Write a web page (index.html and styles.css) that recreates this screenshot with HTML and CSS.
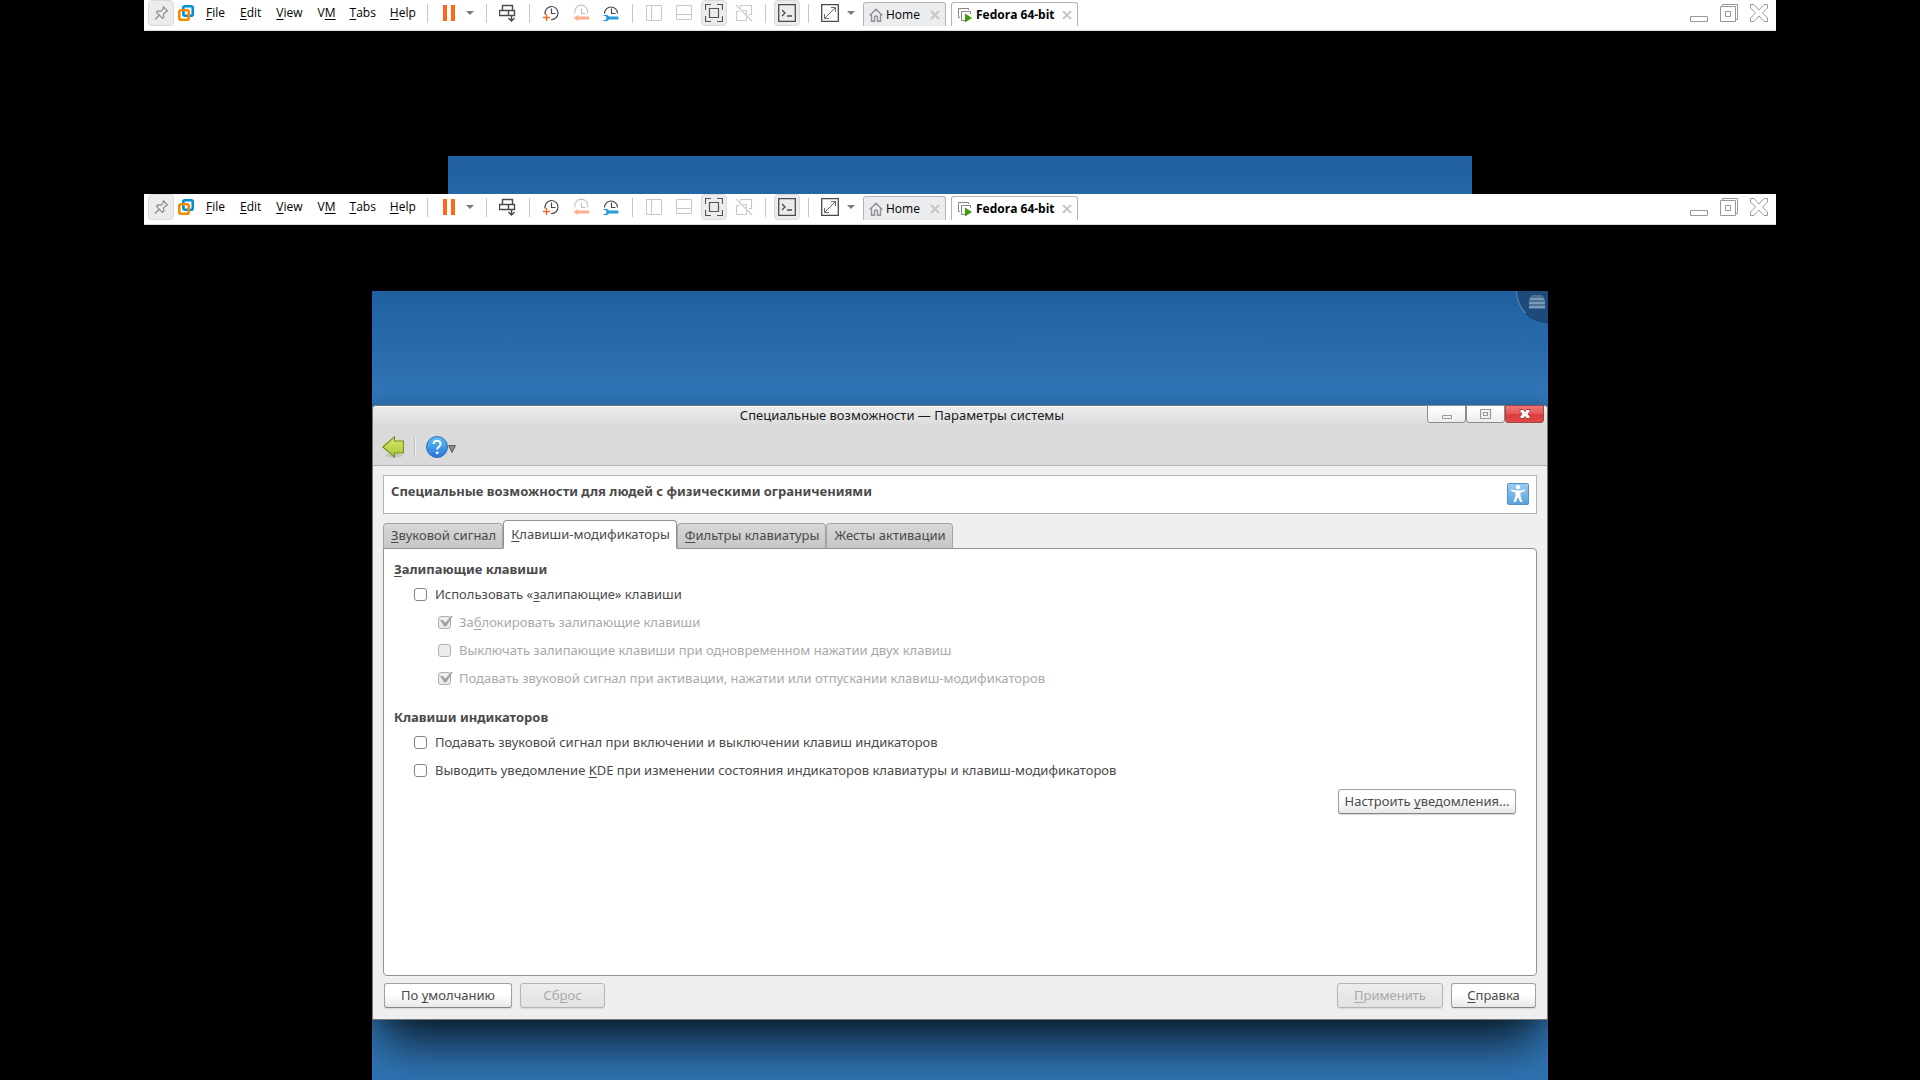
FILE: index.html
```html
<!DOCTYPE html>
<html lang="ru">
<head>
<meta charset="utf-8">
<title>Специальные возможности — Параметры системы</title>
<link rel="stylesheet" href="styles.css">
</head>
<body>
<svg class="sprite" aria-hidden="true">
  <symbol id="i-pin" viewBox="0 0 18 18"><g fill="none" stroke="#8a8d91" stroke-width="1.2"><path d="M11.500 3l4 4-1.500.8-2.500 2.200.3 3-1.300 1.300-6-6 1.300-1.300 3 .3 2.200-2.500z"/><path d="M7.500 11L3 15.500"/></g></symbol>
  <symbol id="i-logo" viewBox="0 0 16 16"><g fill="none" stroke-width="2.600"><rect x="5.300" y="1.300" width="9.400" height="9.400" rx="1.500" stroke="#0091da"/><rect x="1.300" y="5.300" width="9.400" height="9.400" rx="1.500" stroke="#f38b00"/><path d="M5.300 9.500V7" stroke="#0091da"/></g></symbol>
  <symbol id="i-pause" viewBox="0 0 18 18"><path d="M3 1h4v16H3zM11 1h4v16h-4z" fill="#ff671b"/></symbol>
  <symbol id="i-send" viewBox="0 0 18 18"><path d="M3.500 1.500h10v5h-10zM.5 6.500h15v5H.5zM9.500 6.500v5M12.500 11v6M9.500 14l3 3 3-3" fill="none" stroke="#4a4a4a" stroke-width="1.400"/></symbol>
  <symbol id="i-snap" viewBox="0 0 18 18"><path d="M3.200 10.500A6.500 6.500 0 1 1 9 15.500M9.500 4.500v5h4" fill="none" stroke="#4a4a4a" stroke-width="1.200"/><path d="M4.500 10v7M1 13.500h7" stroke="#ff671b" stroke-width="1.300"/></symbol>
  <symbol id="i-revert" viewBox="0 0 18 18"><path d="M3 9.500A6.500 6.500 0 1 1 15.500 9.500M9.500 4.500v5h4" fill="none" stroke="#c4c4c4" stroke-width="1.200"/><path d="M1.500 14L6 11v1.500h11v3H6V17z" fill="#ffb08a"/></symbol>
  <symbol id="i-manage" viewBox="0 0 18 18"><path d="M2.500 9.500A6.500 6.500 0 1 1 15.500 9.500M9.500 4.500v5h4" fill="none" stroke="#4a4a4a" stroke-width="1.200"/><path d="M1 12h2.500l1 2-1 2H1c1 1.700 4.500 1.700 6-.5h9q1.500-1.500 0-3H7c-1.500-2.200-5-2.200-6-.5z" fill="#2a99de"/></symbol>
  <symbol id="i-side" viewBox="0 0 18 18"><path d="M1.500 1.500h15v15h-15zM6.500 1.500v15" fill="none" stroke="#c8c8c8"/></symbol>
  <symbol id="i-bottom" viewBox="0 0 18 18"><path d="M1.500 1.500h15v14h-15zM1.500 10.500h15" fill="none" stroke="#c8c8c8"/></symbol>
  <symbol id="i-full" viewBox="0 0 18 18"><path d="M.5 6V.5H6M12 .5h5.500V6M17.500 12v5.500H12M6 17.500H.5V12M4.500 4.500h9v9h-9z" fill="none" stroke="#555" stroke-width="1.200"/></symbol>
  <symbol id="i-unity" viewBox="0 0 18 18"><path d="M5.500 1.500h11v9h-3M1.500 16.500h10v-4M5.500 1.500v2M1.500 16.500V7.500h3M8 6.500h3.500V10M1 1l16 16" fill="none" stroke="#c8c8c8" stroke-width="1.100"/></symbol>
  <symbol id="i-term" viewBox="0 0 18 18"><path d="M.7.700h16.600v16.600H.7z" fill="none" stroke="#4a4a4a" stroke-width="1.300"/><path d="M4 6l3 3-3 3M9 12h5" fill="none" stroke="#4a4a4a" stroke-width="1.300"/></symbol>
  <symbol id="i-stretch" viewBox="0 0 18 18"><path d="M.7.700h16.600v16.600H.7z" fill="none" stroke="#4a4a4a" stroke-width="1.300"/><path d="M10 3.500h4.500V8M3.500 10v4.500H8M14 4L4 14" fill="none" stroke="#666"/></symbol>
  <symbol id="i-caret" viewBox="0 0 8 4"><path d="M0 0h8L4 4z" fill="#7b7b7b"/></symbol>
  <symbol id="i-home" viewBox="0 0 14 14"><path d="M.7 7.500L7 1.200l6.300 6.300M2.500 6.500v6.800h3V9.500q0-1.500 1.500-1.500t1.500 1.500v3.800h3V6.500" fill="none" stroke="#8f9296" stroke-width="1.400"/></symbol>
  <symbol id="i-vm" viewBox="0 0 16 16"><path d="M3 10.500H1.500v-9h10V3M8 13.500H4.500v-9h9V7" fill="none" stroke="#858585"/><path d="M8 6.500l7 4.500-7 4.500z" fill="#3f9c12"/></symbol>
  <symbol id="i-close" viewBox="0 0 10 10"><path d="M1 1l8 8M9 1L1 9" stroke="#c6c7c8" stroke-width="2"/></symbol>
  <symbol id="i-min" viewBox="0 0 18 18"><path d="M.5 12.500h17v5H.5z" fill="none" stroke="#999"/></symbol>
  <symbol id="i-restore" viewBox="0 0 18 18"><path d="M.5 2.500h15v15H.5zM2.500 2.500v-2h15v15h-2M5.500 7.500h5v5h-5z" fill="none" stroke="#999"/></symbol>
  <symbol id="i-x" viewBox="0 0 18 18"><path d="M.5.500H4l5 5.500 5-5.500h3.500V4l-5 5 5 5v3.500H14L9 12l-5 5.500H.5V14l5-5-5-5z" fill="none" stroke="#999"/></symbol>
</svg>

<section class="capture">
  <header class="vmbar">
    <button class="tool on" aria-label="Pin"><svg><use href="#i-pin"/></svg></button>
    <svg class="logo" aria-hidden="true"><use href="#i-logo"/></svg>
    <nav class="menu">
      <button><u>F</u>ile</button><button><u>E</u>dit</button><button><u>V</u>iew</button><button>V<u>M</u></button><button><u>T</u>abs</button><button><u>H</u>elp</button>
    </nav>
    <span class="sep"></span>
    <button class="tool" aria-label="Suspend"><svg><use href="#i-pause"/></svg></button>
    <button class="drop" aria-label="Power options"><svg><use href="#i-caret"/></svg></button>
    <span class="sep"></span>
    <button class="tool" aria-label="Send keys"><svg><use href="#i-send"/></svg></button>
    <span class="sep"></span>
    <div class="tools">
      <button class="tool" aria-label="Take snapshot"><svg><use href="#i-snap"/></svg></button>
      <button class="tool" aria-label="Revert snapshot" disabled><svg><use href="#i-revert"/></svg></button>
      <button class="tool" aria-label="Manage snapshots"><svg><use href="#i-manage"/></svg></button>
    </div>
    <span class="sep"></span>
    <div class="tools">
      <button class="tool" aria-label="Library" disabled><svg><use href="#i-side"/></svg></button>
      <button class="tool" aria-label="Thumbnail bar" disabled><svg><use href="#i-bottom"/></svg></button>
      <button class="tool on" aria-label="Full screen"><svg><use href="#i-full"/></svg></button>
      <button class="tool" aria-label="Unity" disabled><svg><use href="#i-unity"/></svg></button>
    </div>
    <span class="sep"></span>
    <button class="tool on" aria-label="Console view"><svg><use href="#i-term"/></svg></button>
    <span class="sep"></span>
    <button class="tool" aria-label="Stretch"><svg><use href="#i-stretch"/></svg></button>
    <button class="drop" aria-label="Stretch options"><svg><use href="#i-caret"/></svg></button>
    <div class="vmtabs">
      <div class="vmtab"><svg class="home"><use href="#i-home"/></svg><button class="name">Home</button><button class="shut" aria-label="Close Home"><svg><use href="#i-close"/></svg></button></div>
      <div class="vmtab current"><svg class="vm"><use href="#i-vm"/></svg><button class="name">Fedora 64-bit</button><button class="shut" aria-label="Close Fedora"><svg><use href="#i-close"/></svg></button></div>
    </div>
    <div class="winctl">
      <button aria-label="Minimize"><svg><use href="#i-min"/></svg></button>
      <button aria-label="Restore"><svg><use href="#i-restore"/></svg></button>
      <button aria-label="Close"><svg><use href="#i-x"/></svg></button>
    </div>
  </header>
  <div class="strip"></div>
</section>

<section class="capture main">
  <header class="vmbar">
    <button class="tool on" aria-label="Pin"><svg><use href="#i-pin"/></svg></button>
    <svg class="logo" aria-hidden="true"><use href="#i-logo"/></svg>
    <nav class="menu">
      <button><u>F</u>ile</button><button><u>E</u>dit</button><button><u>V</u>iew</button><button>V<u>M</u></button><button><u>T</u>abs</button><button><u>H</u>elp</button>
    </nav>
    <span class="sep"></span>
    <button class="tool" aria-label="Suspend"><svg><use href="#i-pause"/></svg></button>
    <button class="drop" aria-label="Power options"><svg><use href="#i-caret"/></svg></button>
    <span class="sep"></span>
    <button class="tool" aria-label="Send keys"><svg><use href="#i-send"/></svg></button>
    <span class="sep"></span>
    <div class="tools">
      <button class="tool" aria-label="Take snapshot"><svg><use href="#i-snap"/></svg></button>
      <button class="tool" aria-label="Revert snapshot" disabled><svg><use href="#i-revert"/></svg></button>
      <button class="tool" aria-label="Manage snapshots"><svg><use href="#i-manage"/></svg></button>
    </div>
    <span class="sep"></span>
    <div class="tools">
      <button class="tool" aria-label="Library" disabled><svg><use href="#i-side"/></svg></button>
      <button class="tool" aria-label="Thumbnail bar" disabled><svg><use href="#i-bottom"/></svg></button>
      <button class="tool on" aria-label="Full screen"><svg><use href="#i-full"/></svg></button>
      <button class="tool" aria-label="Unity" disabled><svg><use href="#i-unity"/></svg></button>
    </div>
    <span class="sep"></span>
    <button class="tool on" aria-label="Console view"><svg><use href="#i-term"/></svg></button>
    <span class="sep"></span>
    <button class="tool" aria-label="Stretch"><svg><use href="#i-stretch"/></svg></button>
    <button class="drop" aria-label="Stretch options"><svg><use href="#i-caret"/></svg></button>
    <div class="vmtabs">
      <div class="vmtab"><svg class="home"><use href="#i-home"/></svg><button class="name">Home</button><button class="shut" aria-label="Close Home"><svg><use href="#i-close"/></svg></button></div>
      <div class="vmtab current"><svg class="vm"><use href="#i-vm"/></svg><button class="name">Fedora 64-bit</button><button class="shut" aria-label="Close Fedora"><svg><use href="#i-close"/></svg></button></div>
    </div>
    <div class="winctl">
      <button aria-label="Minimize"><svg><use href="#i-min"/></svg></button>
      <button aria-label="Restore"><svg><use href="#i-restore"/></svg></button>
      <button aria-label="Close"><svg><use href="#i-x"/></svg></button>
    </div>
  </header>

  <div class="desktop">
    <button class="toolbox" aria-label="Desktop toolbox">
      <svg viewBox="0 0 16 14"><path d="M3 0h10l3 4v10H0V4z" fill="#4c7196"/><path d="M1 4h14M0 8h16M0 12h16" stroke="#8ba6c0" stroke-width="1.500"/></svg>
    </button>

    <main class="window">
      <header class="chrome">
        <div class="titlebar">
          <h1>Специальные возможности — Параметры системы</h1>
          <div class="wbtns">
            <button aria-label="Свернуть"><svg viewBox="0 0 12 12"><path d="M1.500 7.500h9v3h-9z" fill="none" stroke="#999"/></svg></button>
            <button aria-label="Развернуть"><svg viewBox="0 0 12 12"><path d="M.5 1.500h10v9H.5zM3.500 4.500h4v3h-4z" fill="none" stroke="#999" stroke-width="1.200"/></svg></button>
            <button class="kill" aria-label="Закрыть"><svg viewBox="0 0 12 12"><path d="M1 1.500h3.500L6 3.500l1.500-2H11v2L9 6l2 2.500v2H7.500L6 8.500l-1.500 2H1v-2L3 6 1 3.500z" fill="#fff" stroke="#b73535"/></svg></button>
          </div>
        </div>
        <div class="actions">
          <button class="act" aria-label="Назад">
            <svg viewBox="0 0 22 22"><defs><linearGradient id="g-back" x2="0" y2="1"><stop offset="0" stop-color="#dfe96c"/><stop offset="1" stop-color="#a8c332"/></linearGradient></defs><ellipse cx="12" cy="19.500" rx="9" ry="1.800" fill="#c2c2c2"/><path d="M.8 11L12.500.8v4.200h9v12h-9v4.200z" fill="url(#g-back)" stroke="#6f9322" stroke-width="1.100"/></svg>
          </button>
          <span class="groove"></span>
          <button class="act help" aria-label="Справка">
            <svg viewBox="0 0 22 22"><defs><linearGradient id="g-help" x2="0" y2="1"><stop offset="0" stop-color="#5cc2f4"/><stop offset="1" stop-color="#2a74e0"/></linearGradient></defs><circle cx="11" cy="11" r="10.500" fill="url(#g-help)" stroke="#2f6fb5"/><path d="M7.600 8c0-4.400 7-4.400 7 0 0 2.800-3.400 2.800-3.400 5.500" fill="none" stroke="#fff" stroke-width="2"/><circle cx="11.200" cy="16.800" r="1.400" fill="#fff"/></svg>
            <svg class="tri" viewBox="0 0 8 8"><path d="M.5.500h7L4 7.500z" fill="#8a8a8a" stroke="#5f5f5f"/></svg>
          </button>
        </div>
      </header>

      <div class="content">
        <div class="banner">
          <h2>Специальные возможности для людей с физическими ограничениями</h2>
          <svg viewBox="0 0 22 22"><defs><linearGradient id="g-acc" x2="0" y2="1"><stop offset="0" stop-color="#9bcdf4"/><stop offset="1" stop-color="#5aa0dc"/></linearGradient></defs><rect x=".5" y=".5" width="21" height="21" rx="1" fill="url(#g-acc)" stroke="#5590c4"/><circle cx="11" cy="4.300" r="2.200" fill="#fff"/><path d="M4 6.500l5 1h4l5-1v1.500l-4.500 1.500v3.500l2 6h-2.200L11 14l-2.300 5H6.500l2-6V9.500L4 8z" fill="#fff"/></svg>
        </div>

        <div class="tabs" role="tablist">
          <button role="tab"><u>З</u>вуковой сигнал</button>
          <button role="tab" class="current" aria-selected="true"><u>К</u>лавиши-модификаторы</button>
          <button role="tab"><u>Ф</u>ильтры клавиатуры</button>
          <button role="tab">Жесты активации</button>
        </div>

        <div class="panel" role="tabpanel">
          <h3><u>З</u>алипающие клавиши</h3>
          <label class="row"><input type="checkbox"><span>Использовать «<u>з</u>алипающие» клавиши</span></label>
          <label class="row sub"><input type="checkbox" checked disabled><span>За<u>б</u>локировать залипающие клавиши</span></label>
          <label class="row sub"><input type="checkbox" disabled><span>Выключать залипающие клавиши при одновременном нажатии двух клавиш</span></label>
          <label class="row sub"><input type="checkbox" checked disabled><span>Подавать звуковой сигнал при активации, нажатии или отпускании клавиш-модификаторов</span></label>
          <h3 class="second">Клавиши индикаторов</h3>
          <label class="row"><input type="checkbox"><span>Подавать звуковой сигнал при включении и выключении клавиш индикаторов</span></label>
          <label class="row"><input type="checkbox"><span>Выводить уведомление <u>K</u>DE при изменении состояния индикаторов клавиатуры и клавиш-модификаторов</span></label>
          <button class="btn notify">Настроить <u>у</u>ведомления...</button>
        </div>

        <footer class="foot">
          <button class="btn w-l">По <u>у</u>молчанию</button>
          <button class="btn w-s" disabled>Сб<u>р</u>ос</button>
          <span class="grow"></span>
          <button class="btn w-m" disabled><u>П</u>рименить</button>
          <button class="btn w-s"><u>С</u>правка</button>
        </footer>
      </div>
    </main>
  </div>
</section>
</body>
</html>
```
FILE: styles.css
```css
* { box-sizing: border-box; }

body {
  margin: 0;
  min-height: 100vh;
  display: flex;
  flex-direction: column;
  background: #000;
  color: #4a4a4a;
  font: 13px/20px "Noto Sans", sans-serif;
}

button {
  margin: 0;
  padding: 0;
  border: 0;
  background: none;
  color: inherit;
  font: inherit;
  white-space: nowrap;
}

u { text-underline-offset: 2px; text-decoration-thickness: 1px; text-decoration-skip-ink: none; }
svg { display: block; }
.sprite { position: absolute; width: 0; height: 0; }

.capture { display: flex; flex-direction: column; align-items: center; }
.capture.main { flex: 1; }

/* Virtual machine toolbar */
.vmbar {
  width: 85%;
  height: 31px;
  padding: 0 8px 4px 4px;
  display: flex;
  align-items: center;
  background: #fff;
  border-bottom: 1px solid #dcdcdc;
  color: #000;
  font: 12px/16px "Open Sans", "Noto Sans", sans-serif;
}
.tool {
  flex: none;
  width: 26px;
  height: 26px;
  display: grid;
  place-items: center;
  border: 1px solid transparent;
  border-radius: 4px;
}
.tool.on { background: #ebecee; border-color: #d9dadb; }
.tool svg { width: 18px; height: 18px; }
.tools { display: flex; gap: 4px; }
.logo { width: 16px; height: 16px; margin: 0 4px; flex: none; }
.menu { display: flex; width: 221px; }
.menu button { padding: 0 7px; }
.menu button:first-child { padding: 0 8px; }
.menu button:nth-child(3) { padding: 0 8px; }
.sep { flex: none; width: 1px; height: 19px; margin: 0 8px; background: #c8c8c8; }
.drop { flex: none; width: 16px; height: 26px; display: grid; place-items: center; }
.drop svg { width: 8px; height: 4px; }
.vmtabs { display: flex; align-self: flex-end; gap: 5px; margin-left: 4px; }
.vmtab {
  height: 24px;
  width: 83px;
  padding: 0 5px;
  display: flex;
  align-items: center;
  gap: 3px;
  border: 1px solid #b4b4b4;
  border-bottom: 0;
  border-radius: 3px 3px 0 0;
  background: #ebecee;
}
.vmtab.current { width: 127px; background: #fff; font-weight: 700; }
.home { width: 14px; height: 14px; }
.vm { width: 16px; height: 16px; }
.vmtab svg { flex: none; }
.shut { margin-left: auto; }
.shut svg { width: 10px; height: 10px; }
.winctl { display: flex; gap: 12px; margin-left: auto; }
.winctl svg { width: 18px; height: 18px; }

/* Desktops */
.strip {
  width: 53.3333%;
  height: 38px;
  margin-top: 125px;
  background: linear-gradient(#2060a0, #2566a7);
}
.desktop {
  position: relative;
  flex: 1;
  width: 61.25%;
  margin-top: 66px;
  padding: 114px 0 60px;
  overflow: hidden;
  background: linear-gradient(#2060a0, #2f74b4 100px, #2f74b4);
}
.toolbox {
  position: absolute;
  top: 0;
  right: 0;
  width: 32px;
  height: 32px;
  padding: 4px 0 0 12px;
  display: flex;
  background: #1d4a7a;
  border-left: 1px solid #5f8cb8;
  border-bottom: 1px solid #17406c;
  border-bottom-left-radius: 32px;
}
.toolbox svg { width: 16px; height: 14px; }

/* Settings window */
.window {
  background: #efefef;
  border: 1px solid #777;
  border-radius: 4px 4px 0 0;
  box-shadow: 0 2px 16px rgba(0, 0, 0, .25), 0 36px 44px -12px rgba(0, 0, 0, .72);
}
.chrome {
  border-top: 1px solid #f8f8f8;
  border-bottom: 1px solid #b4b4b4;
  border-radius: 3px 3px 0 0;
  background: linear-gradient(#ececec, #dadada 20px);
}
.titlebar { display: flex; height: 17px; }
h1 {
  flex: 1;
  margin: 0;
  padding-left: 4px;
  color: #1a1a1a;
  font-size: 13px;
  line-height: 16px;
  font-weight: 400;
  text-align: center;
}
.wbtns { display: flex; margin: -2px 3px 0 0; height: 18px; }
.wbtns button {
  width: 39px;
  height: 18px;
  display: grid;
  place-items: center;
  border: 1px solid #8c8c8c;
  border-radius: 0 0 3px 3px;
  background: linear-gradient(#fff, #ededed);
}
.wbtns svg { width: 12px; height: 12px; }
.wbtns .kill { border-color: #a14545; background: linear-gradient(#ee7676, #e65656 50%, #dc3c3c 50%, #e04848); }
.actions { display: flex; align-items: center; padding: 12px 9px 7px; }
.act { display: flex; align-items: center; }
.act svg { width: 22px; height: 22px; }
.act .tri { width: 8px; height: 8px; margin-top: 4px; }
.groove { width: 2px; height: 20px; margin: 0 10px; background: #c0c0c0; border-right: 1px solid #eee; }

.content { padding: 9px 10px 11px; }
.banner {
  height: 39px;
  padding: 0 7px;
  display: flex;
  justify-content: space-between;
  background: #fff;
  border: 1px solid #b4b4b4;
}
.banner h2 { margin: 5px 0 0; font-size: 13px; line-height: 20px; }
.banner svg { width: 22px; height: 22px; margin-top: 7px; }

.tabs { display: flex; align-items: flex-end; margin: 6px 0 -1px; }
.tabs button {
  height: 26px;
  padding: 0 6px 2px 7px;
  border: 1px solid #a4a4a4;
  border-bottom-color: #939393;
  border-radius: 4px 4px 0 0;
  background: linear-gradient(#d8d8d8, #c6c6c6);
}
.tabs button.current {
  position: relative;
  height: 29px;
  border-color: #939393;
  border-bottom-color: #fff;
  background: #fff;
}
.panel {
  min-height: 428px;
  padding: 10px 20px 16px 10px;
  display: flex;
  flex-direction: column;
  background: #fff;
  border: 1px solid #939393;
  border-radius: 0 4px 4px 4px;
}
h3 { margin: 0 0 1px; font-size: 13px; line-height: 20px; }
h3.second { margin-top: 15px; }
.row { display: flex; align-items: center; gap: 8px; height: 28px; padding-left: 20px; }
.row.sub { padding-left: 44px; color: #a9a9a9; }
.row input {
  appearance: none;
  position: relative;
  width: 13px;
  height: 13px;
  margin: 0;
  border: 1px solid #858585;
  border-radius: 3px;
  background: #fff;
}
.row input:disabled { border-color: #b0b0b0; background: #ededed; }
.row input:checked::after {
  content: "";
  position: absolute;
  inset: -1px -3px 1px 1px;
  background: #a0a0a0;
  clip-path: polygon(0 40%, 22% 40%, 42% 65%, 88% 0, 100% 0, 48% 100%, 34% 100%);
}

.btn {
  height: 25px;
  padding-bottom: 2px;
  border: 1px solid #a0a0a0;
  border-bottom-color: #858585;
  border-radius: 3px;
  background: linear-gradient(#fff 45%, #e8e8e8);
  box-shadow: 0 1px 1px #d8d8d8;
}
.btn:disabled { color: #a9a9a9; border-color: #b4b4b4; background: linear-gradient(#ededed, #e2e2e2); }
.notify { align-self: flex-end; width: 178px; margin-top: 5px; }
.foot { display: flex; gap: 8px; padding: 7px 1px 0; }
.grow { flex: 1; }
.w-l { width: 128px; }
.w-m { width: 106px; }
.w-s { width: 85px; }
```
